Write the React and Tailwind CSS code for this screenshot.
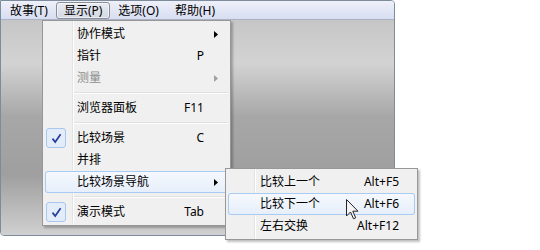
import React from "react";

const font = { fontFamily: '"Noto Sans", "Noto Sans CJK SC", sans-serif' };

const Check = () => (
  <div className="ml-[1px] w-[20px] h-[20px] rounded-[3px] border border-[#a8c6ee] bg-[#e3ecf9] flex items-center justify-center">
    <svg width="11" height="11" viewBox="0 0 11 11">
      <path d="M1.5 5.6 L4.2 9 L9.6 1.2" fill="none" stroke="#283c9c" strokeWidth="1.7" />
    </svg>
  </div>
);

const Arrow = ({ disabled }) => (
  <svg width="4" height="7" viewBox="0 0 4 7">
    <path d="M0 0 L4 3.5 L0 7 Z" fill={disabled ? "#a0a0a0" : "#000"} />
  </svg>
);

const Separator = ({ indent }) => (
  <div className={`h-[8px] flex flex-col justify-center ${indent}`}>
    <div className="border-t border-[#e0e0e0]" />
    <div className="border-t border-white" />
  </div>
);

const Row = ({ label, shortcut, checked, submenu, disabled, active }) => (
  <div
    className={`h-[22px] flex items-center rounded-[3px] ${
      active
        ? "ring-1 ring-inset ring-[#aacbf1] bg-gradient-to-b from-[#f6f9fe] to-[#e6eefa]"
        : ""
    } ${disabled ? "text-[#8d8d8d]" : "text-black"}`}
  >
    <div className="w-[32px] flex items-center">{checked && <Check />}</div>
    <span className="flex-1">{label}</span>
    {shortcut && <span>{shortcut}</span>}
    <div className="w-[24px] h-full flex items-center pl-[10px]">
      {submenu && <Arrow disabled={disabled} />}
    </div>
  </div>
);

const SubRow = ({ label, shortcut, active }) => (
  <div
    className={`h-[22px] flex items-center rounded-[3px] ${
      active
        ? "ring-1 ring-inset ring-[#aacbf1] bg-gradient-to-b from-[#f6f9fe] to-[#e6eefa]"
        : ""
    }`}
  >
    <div className="w-[32px]" />
    <span className="flex-1">{label}</span>
    <span className="pr-[16px]">{shortcut}</span>
  </div>
);

export default function App() {
  const menus = [
    { label: "故事(T)" },
    { label: "显示(P)", open: true },
    { label: "选项(O)" },
    { label: "帮助(H)" },
  ];

  return (
    <div className="relative w-[540px] h-[250px] bg-white text-[12px] leading-none" style={font}>
      {/* Window */}
      <div className="w-[395px] h-[236px] flex flex-col border border-[#7d8c9c] rounded-tr-[4px] rounded-bl-[4px] overflow-hidden">
        <div className="h-[19px] flex items-start pl-[1px] pt-[1px] bg-gradient-to-b from-[#eef0f9] to-[#d8def2] border-b border-[#aab2c6]">
          {menus.map((m) => (
            <div
              key={m.label}
              className={`h-[17px] px-[7px] flex items-center border rounded-[3px] ${
                m.open
                  ? "border-[#8a8e97] bg-gradient-to-b from-[#e9ebf1] to-[#d3d8e4] shadow-[inset_0_0_0_1px_rgba(255,255,255,0.6)]"
                  : "border-transparent"
              }`}
            >
              {m.label}
            </div>
          ))}
        </div>
        <div className="flex-1 bg-[linear-gradient(to_bottom,#c6c6c6_0%,#d3d3d3_20%,#a7a7a7_45%,#9f9f9f_72%,#d0d0d0_100%)]" />
      </div>

      {/* Dropdown menu */}
      <div className="absolute left-[42px] top-[20px] w-[189px] h-[206px] p-[2px] bg-[#f0f0f0] border border-[#979797] shadow-[2px_2px_2px_rgba(0,0,0,0.25)]">
        <div className="absolute left-[29px] top-0 bottom-0 w-[2px] border-l border-[#e2e3e3] border-r border-r-white" />
        <div className="relative">
          <Row label="协作模式" submenu />
          <Row label="指针" shortcut="P" />
          <Row label="测量" submenu disabled />
          <Separator indent="ml-[29px]" />
          <Row label="浏览器面板" shortcut="F11" />
          <Separator indent="ml-[29px]" />
          <Row label="比较场景" shortcut="C" checked />
          <Row label="并排" />
          <Row label="比较场景导航" submenu active />
          <Separator indent="ml-[29px]" />
          <Row label="演示模式" shortcut="Tab" checked />
        </div>
      </div>

      {/* Submenu */}
      <div className="absolute left-[225px] top-[168px] w-[193px] h-[72px] p-[2px] bg-[#f0f0f0] border border-[#979797] shadow-[2px_2px_2px_rgba(0,0,0,0.25)]">
        <div className="absolute left-[28px] top-0 bottom-0 w-[2px] border-l border-[#e2e3e3] border-r border-r-white" />
        <div className="relative">
          <SubRow label="比较上一个" shortcut="Alt+F5" />
          <SubRow label="比较下一个" shortcut="Alt+F6" active />
          <SubRow label="左右交换" shortcut="Alt+F12" />
        </div>
      </div>

      {/* Mouse cursor */}
      <svg className="absolute left-[346px] top-[199px]" width="13" height="21" viewBox="0 0 13 21">
        <path
          d="M0.5 0.5 L0.5 17 L4.5 13 L7.5 19.8 L9.7 18.8 L6.8 12.2 L12 12.2 Z"
          fill="#f4f4f4"
          stroke="#222"
          strokeWidth="1"
          strokeLinejoin="miter"
        />
      </svg>
    </div>
  );
}
